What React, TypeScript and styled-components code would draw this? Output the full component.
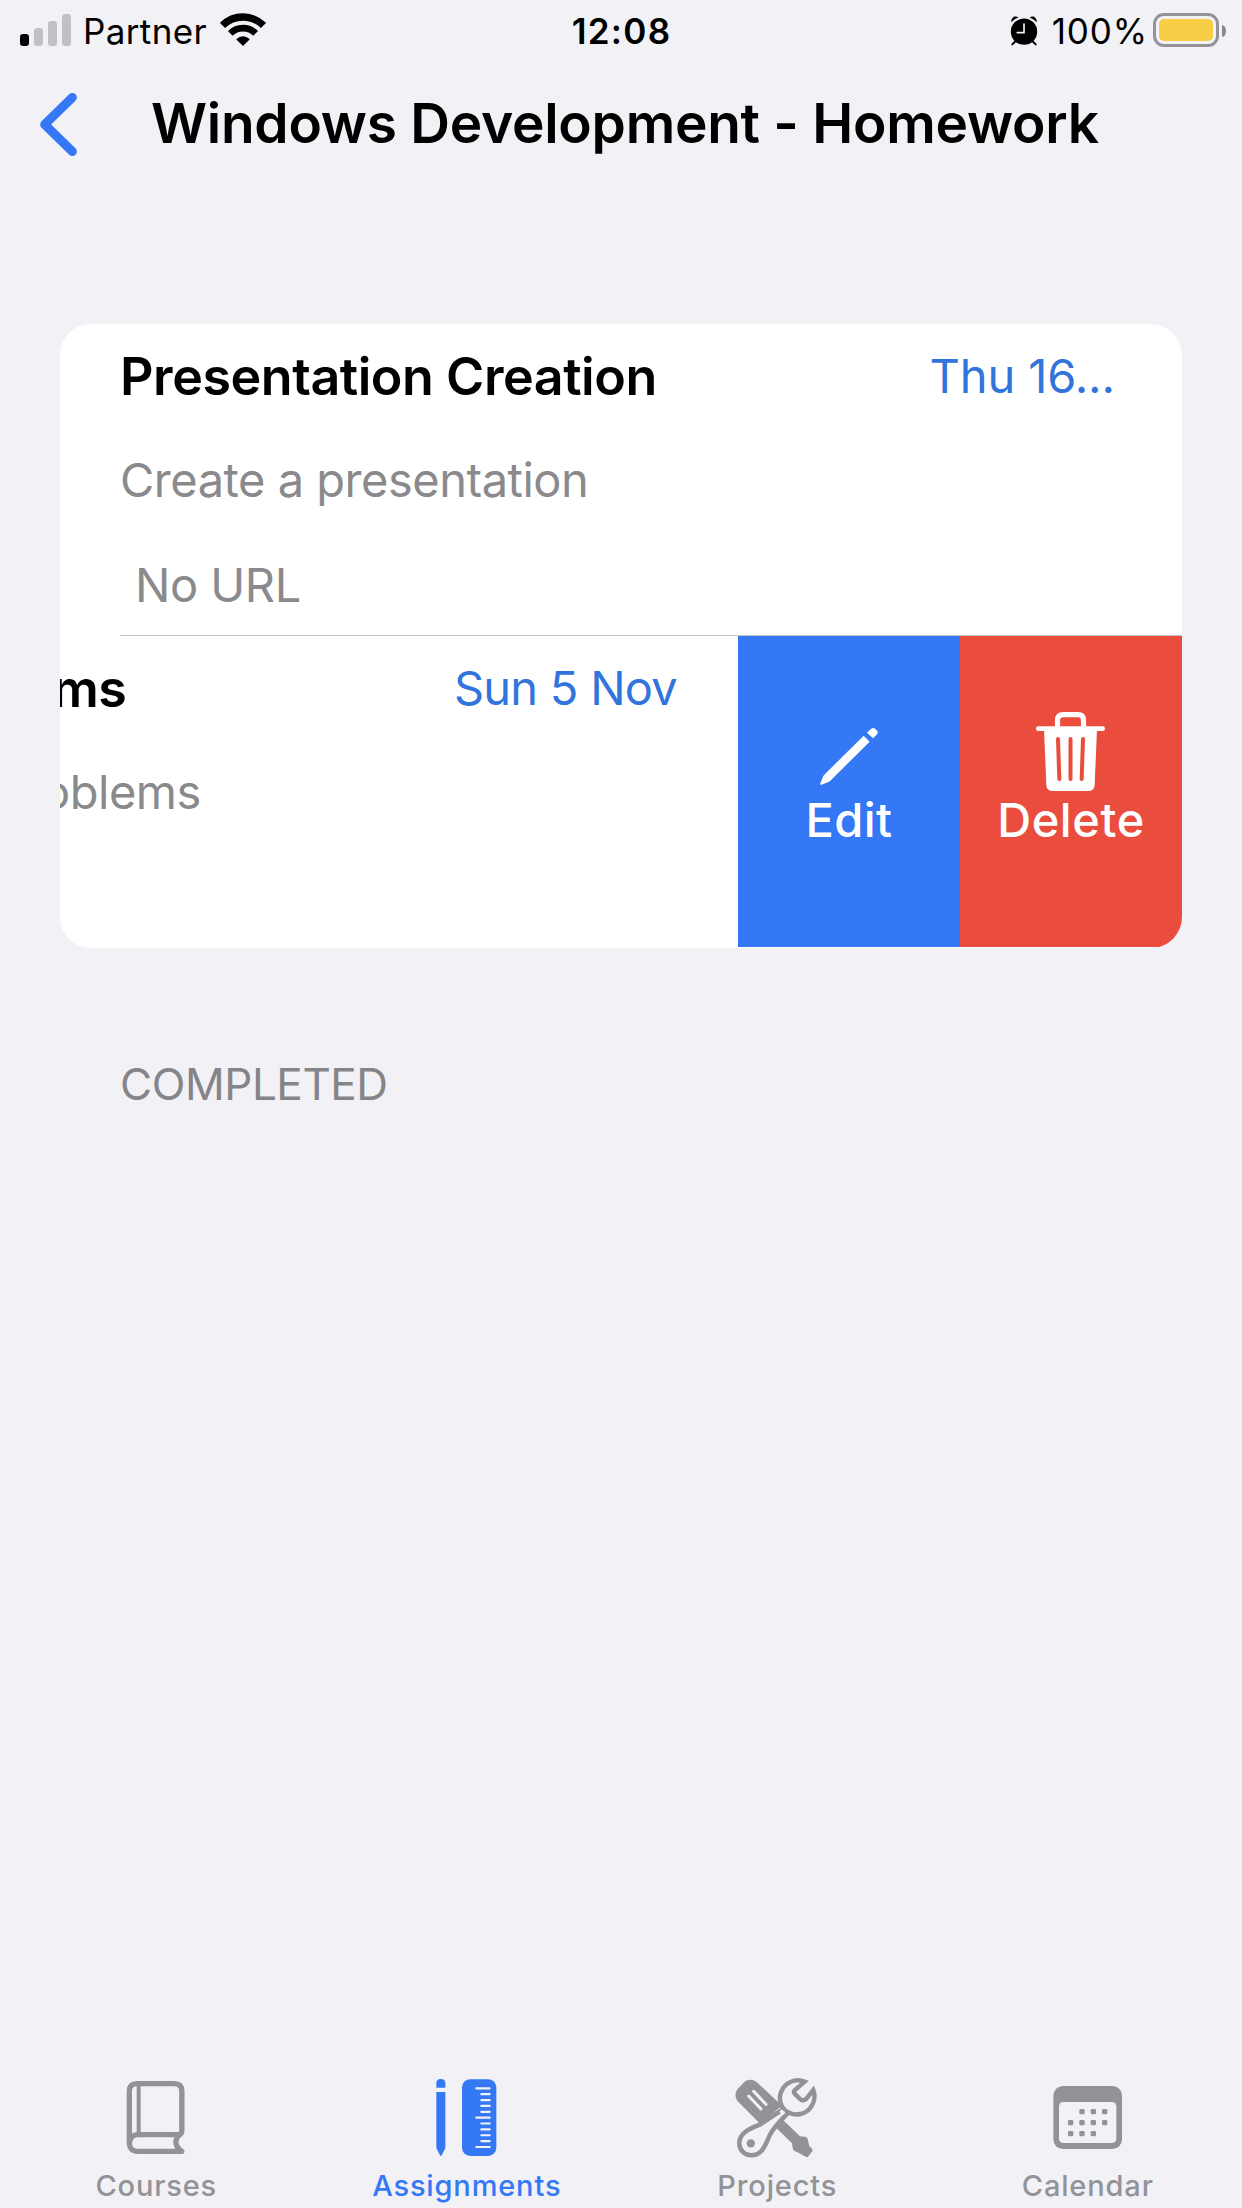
import React from "react";
import styled, { createGlobalStyle } from "styled-components";

const colors = {
  page: "#f1f1f6",
  card: "#ffffff",
  blue: "#3478f6",
  dateBlue: "#3074dc",
  red: "#ea4d3d",
  grey: "#8a8a8c",
  header: "#858489",
  tab: "#929398",
  separator: "#c6c6c8",
};

const GlobalStyle = createGlobalStyle`
  * { box-sizing: border-box; }
  body { margin: 0; background: ${colors.page}; }
`;

const Page = styled.div`
  width: 1242px;
  height: 2208px;
  overflow: hidden;
  display: flex;
  flex-direction: column;
  background: ${colors.page};
  color: #000;
  font-family: Inter, "Liberation Sans", sans-serif;
`;

/* Status bar */

const StatusBar = styled.div`
  height: 62px;
  flex: none;
  display: grid;
  grid-template-columns: 1fr auto 1fr;
  align-items: center;
  padding: 0 16px 0 20px;
  font-size: 35px;
  line-height: 62px;
`;

const StatusGroup = styled.div<{ $end?: boolean }>`
  display: flex;
  align-items: center;
  justify-content: ${(p) => (p.$end ? "flex-end" : "flex-start")};
`;

const SignalBars = styled.div`
  display: flex;
  align-items: flex-end;
  gap: 5px;
  height: 32px;
  margin-right: 12px;
  margin-bottom: 2px;
`;

const SignalBar = styled.span<{ $height: number; $on?: boolean }>`
  width: 9px;
  height: ${(p) => p.$height}px;
  border-radius: 3px;
  background: ${(p) => (p.$on ? "#000" : "#c1c0c6")};
`;

const Carrier = styled.span`
  letter-spacing: 0.37px;
  margin-right: 13px;
`;

const Clock = styled.span`
  font-weight: 600;
  letter-spacing: 1.29px;
  margin-right: 3px;
`;

const Percent = styled.span`
  letter-spacing: 0.87px;
  margin: 0 5px 0 14px;
`;

const Battery = styled.div`
  width: 66px;
  height: 34px;
  padding: 3px;
  border: 3px solid #929297;
  border-radius: 11px;
  margin-right: 3px;
  margin-top: -2px;
`;

const BatteryFill = styled.div`
  height: 22px;
  border-radius: 5px;
  background: #f7ce46;
`;

const BatteryNub = styled.div`
  width: 4px;
  height: 12px;
  border-radius: 0 4px 4px 0 / 0 6px 6px 0;
  background: #88888c;
  margin-top: -1px;
`;

const Glyph = styled.svg<{ $w: number; $h: number; $lift?: number }>`
  display: block;
  flex: none;
  width: ${(p) => p.$w}px;
  height: ${(p) => p.$h}px;
  margin-bottom: ${(p) => p.$lift ?? 0}px;
`;

/* Navigation */

const NavBar = styled.header`
  height: 125px;
  flex: none;
  display: flex;
  align-items: center;
  padding-left: 40px;
`;

const BackButton = styled.button`
  border: 0;
  padding: 0;
  margin: 0 74px 0 0;
  background: none;
`;

const Title = styled.h1`
  margin: 0 0 3px;
  font-size: 55px;
  font-weight: 600;
  letter-spacing: -0.26px;
  white-space: nowrap;
`;

/* Assignment list */

const Card = styled.section`
  margin: 137px 60px 0;
  border-radius: 31px;
  background: ${colors.card};
  overflow: hidden;
`;

const Row = styled.article`
  height: 312px;
  padding: 0 67px 0 60px;
`;

const Line = styled.div`
  height: 104px;
  line-height: 104px;
  display: flex;
  justify-content: space-between;
  white-space: nowrap;
`;

const Name = styled.h2`
  margin: 0;
  font-size: 52px;
  font-weight: 600;
  line-height: 105px;
  letter-spacing: -0.45px;
`;

const Due = styled.span<{ $spacing: number }>`
  color: ${colors.dateBlue};
  font-size: 47px;
  letter-spacing: ${(p) => p.$spacing}px;
`;

const Note = styled.span<{ $indent?: boolean }>`
  color: ${colors.grey};
  font-size: 47px;
  line-height: ${(p) => (p.$indent ? 106 : 104)}px;
  letter-spacing: -0.48px;
  margin-left: ${(p) => (p.$indent ? 15 : 0)}px;
`;

const Divider = styled.hr`
  height: 1px;
  margin: -1px 0 0 60px;
  border: 0;
  background: ${colors.separator};
`;

const SwipedRow = styled.article`
  height: 312px;
  display: grid;
  grid-template-columns: 678px 222px 222px;
`;

const Shifted = styled.div`
  overflow: hidden;
  padding-right: 61px;
`;

const Slid = styled.div<{ $by: number }>`
  margin-left: -${(p) => p.$by}px;
`;

const Action = styled.button<{ $color: string }>`
  height: 311px;
  border: 0;
  padding: 76px 0 0;
  display: flex;
  flex-direction: column;
  align-items: center;
  background: ${(p) => p.$color};
  color: #fff;
  font: 500 47px/56px Inter, "Liberation Sans", sans-serif;
`;

const ActionLabel = styled.span<{ $spacing: number }>`
  letter-spacing: ${(p) => p.$spacing}px;
`;

const SectionHeader = styled.h3`
  margin: 106px 120px 0;
  font-size: 44px;
  font-weight: 400;
  line-height: 60px;
  letter-spacing: -0.43px;
  color: ${colors.header};
`;

/* Tab bar */

const TabBar = styled.nav`
  height: 132px;
  margin-top: auto;
  display: grid;
  grid-template-columns: repeat(4, 1fr);
`;

const Tab = styled.a<{ $active?: boolean }>`
  display: flex;
  flex-direction: column;
  align-items: center;
  color: ${(p) => (p.$active ? colors.blue : colors.tab)};
  font-size: 29px;
  font-weight: 500;
  letter-spacing: 0.85px;
  line-height: 45px;
`;

const TabLabel = styled.span`
  margin-top: 3px;
  padding-left: 2px;
`;

const WifiIcon = () => (
  <Glyph $w={46} $h={33} $lift={4} viewBox="660 38 138 99">
    <g fill="none" stroke="#000">
      <path d="M667.5 75.5A87 87 0 0 1 790.5 75.5" strokeWidth="22" />
      <path d="M691 99A54 54 0 0 1 767 99" strokeWidth="20" />
    </g>
    <path d="M729 137L708.5 117Q729 98 749.5 117Z" />
  </Glyph>
);

const AlarmIcon = () => (
  <Glyph $w={28} $h={30} viewBox="148 47 84 90">
    <circle cx="190" cy="94" r="39.5" />
    <path d="M152 66C150 52 164 43 173 52C164 55 157 60 152 66Z" />
    <path d="M228 66C230 52 216 43 207 52C216 55 223 60 228 66Z" />
    <path d="M165 122L155 132M215 122L225 132" stroke="#000" strokeWidth="6" strokeLinecap="round" />
    <path d="M190 71V97H170" fill="none" stroke={colors.page} strokeWidth="5" strokeLinecap="round" strokeLinejoin="round" />
  </Glyph>
);

const BackIcon = () => (
  <Glyph $w={37} $h={63} viewBox="120 279 111 189">
    <path d="M217 292.500L134 373.500L217 454.500" fill="none" stroke={colors.blue} strokeWidth="27" strokeLinecap="round" strokeLinejoin="round" />
  </Glyph>
);

const PencilIcon = () => (
  <Glyph $w={80} $h={80} viewBox="327 276 240 240">
    <g fill="#fff">
      <path d="M361 490L370 468Q371 466 373 464L491 347L509 365L391 482Q389 484 387 485L365 494Q360 496 361 490Z" />
      <path d="M501 338L510 329Q519 320 527 328L530 331Q537 338 529 345L519 355Z" />
    </g>
  </Glyph>
);

const TrashIcon = () => (
  <Glyph $w={80} $h={80} viewBox="993 276 240 240">
    <path d="M1072.500 324V301Q1072.500 284 1090 284H1134Q1150.500 284 1150.500 301V324" fill="none" stroke="#fff" strokeWidth="15.500" />
    <path d="M1015 326H1208" stroke="#fff" strokeWidth="14" strokeLinecap="round" />
    <path d="M1032 328H1191L1184 494Q1183 513 1164 513H1059Q1040 513 1039 494Z" fill="#fff" />
    <path d="M1074 357L1078 477M1111.500 357V477M1149 357L1145 477" stroke={colors.red} strokeWidth="12" strokeLinecap="round" />
  </Glyph>
);

const BookIcon = () => (
  <Glyph $w={84} $h={84} viewBox="100 48 252 252" fill="none" stroke="currentColor">
    <path
      d="M306.500 274H173C157 274 149 264 149 249V94C149 79 157 71 172 71H284C299 71 306.500 79 306.500 94V213C306.500 220 302 224 295 224H174C159 224 151 234 149 249"
      strokeWidth="16"
      strokeLinecap="round"
      strokeLinejoin="round"
    />
    <path d="M302 222C284 236 284 258 304 272" strokeWidth="16" />
    <path d="M177 76V220" strokeWidth="12" />
  </Glyph>
);

const RulerIcon = () => (
  <Glyph $w={84} $h={84} viewBox="191 48 252 252" fill="currentColor">
    <path d="M228 83V70Q228 57 241.500 57Q255 57 255 70V83Z" />
    <path d="M228 96H255V261Q255 264 254 266L244 286Q241.500 290 239 286L229 266Q228 264 228 261Z" />
    <rect x="305" y="57.500" width="103" height="230.500" rx="25" />
    {Array.from({ length: 11 }, (_, i) => (
      <path
        key={i}
        d={`M${i % 5 === 0 ? 348 : 363} ${85 + i * 17.6}H388`}
        stroke={colors.page}
        strokeWidth="6.500"
        strokeLinecap="round"
      />
    ))}
  </Glyph>
);

const ToolsIcon = () => (
  <Glyph $w={84} $h={84} viewBox="103 48 252 252" fill="currentColor">
    <path d="M116 85L131 69C143 56 161 56 173 68L247 137L182 192L117 127C105 115 104 97 116 85Z" />
    <path d="M147 108L184 147M162 94L199 133" stroke={colors.page} strokeWidth="9" strokeLinecap="round" />
    <path d="M250 180L301 229L317 230Q322 231 324 236L329 258L338 268Q340 271 338 274L325 290Q322 292 319 291L299 280L285 273Q279 270 279 264L277 250L231 205Z" />
    <g fill={colors.page} stroke="currentColor" strokeWidth="13.500" strokeLinejoin="round">
      <path d="M253 146L182 193C155 205 119 216 119 250C119 271 135 286 154 286C188 286 197 255 210 226C222 202 240 184 263 161Z" />
      <path d="M315 65L285 91Q281 96 285 101L301 117Q306 122 313 120Q318 119 321 115L341 90C347 105 345 125 335 139C320 163 288 170 265 157C243 145 235 117 245 94C257 67 287 54 315 65Z" strokeLinejoin="miter" />
    </g>
    <path d="M242 152L254 161" stroke={colors.page} strokeWidth="10" />
    <circle cx="153.500" cy="250" r="12.500" />
  </Glyph>
);

const CalendarIcon = () => {
  const dots = [
    [215, 155], [249, 155], [283, 155],
    [181, 188], [215, 188], [249, 188], [283, 188],
    [181, 221], [215, 221], [249, 221],
  ];
  return (
    <Glyph $w={84} $h={84} viewBox="104 48 252 252" fill="currentColor">
      <rect x="129" y="78" width="206" height="189" rx="29" />
      <rect x="146" y="126" width="172" height="123" rx="13" fill={colors.page} />
      {dots.map(([x, y]) => (
        <rect key={`${x}-${y}`} x={x - 8} y={y - 8} width="16" height="16" rx="4" />
      ))}
    </Glyph>
  );
};

const tabs = [
  { label: "Courses", Icon: BookIcon },
  { label: "Assignments", Icon: RulerIcon, active: true },
  { label: "Projects", Icon: ToolsIcon },
  { label: "Calendar", Icon: CalendarIcon },
];

export default function App() {
  return (
    <Page>
      <GlobalStyle />
      <StatusBar>
        <StatusGroup>
          <SignalBars>
            <SignalBar $height={12} $on />
            <SignalBar $height={18} />
            <SignalBar $height={25} />
            <SignalBar $height={32} />
          </SignalBars>
          <Carrier>Partner</Carrier>
          <WifiIcon />
        </StatusGroup>
        <Clock>12:08</Clock>
        <StatusGroup $end>
          <AlarmIcon />
          <Percent>100%</Percent>
          <Battery>
            <BatteryFill />
          </Battery>
          <BatteryNub />
        </StatusGroup>
      </StatusBar>

      <NavBar>
        <BackButton aria-label="Back">
          <BackIcon />
        </BackButton>
        <Title>Windows Development - Homework</Title>
      </NavBar>

      <Card>
        <Row>
          <Line>
            <Name>Presentation Creation</Name>
            <Due $spacing={-0.1}>Thu 16...</Due>
          </Line>
          <Line>
            <Note>Create a presentation</Note>
          </Line>
          <Line>
            <Note $indent>No URL</Note>
          </Line>
        </Row>
        <Divider />
        <SwipedRow>
          <Shifted>
            <Line>
              <Slid $by={8}>
                <Name>ms</Name>
              </Slid>
              <Due $spacing={-0.75}>Sun 5 Nov</Due>
            </Line>
            <Line>
              <Slid $by={18}>
                <Note>oblems</Note>
              </Slid>
            </Line>
          </Shifted>
          <Action $color={colors.blue}>
            <PencilIcon />
            <ActionLabel $spacing={0.4}>Edit</ActionLabel>
          </Action>
          <Action $color={colors.red}>
            <TrashIcon />
            <ActionLabel $spacing={0.6}>Delete</ActionLabel>
          </Action>
        </SwipedRow>
      </Card>

      <SectionHeader>COMPLETED</SectionHeader>

      <TabBar>
        {tabs.map(({ label, Icon, active }) => (
          <Tab key={label} $active={active}>
            <Icon />
            <TabLabel>{label}</TabLabel>
          </Tab>
        ))}
      </TabBar>
    </Page>
  );
}
